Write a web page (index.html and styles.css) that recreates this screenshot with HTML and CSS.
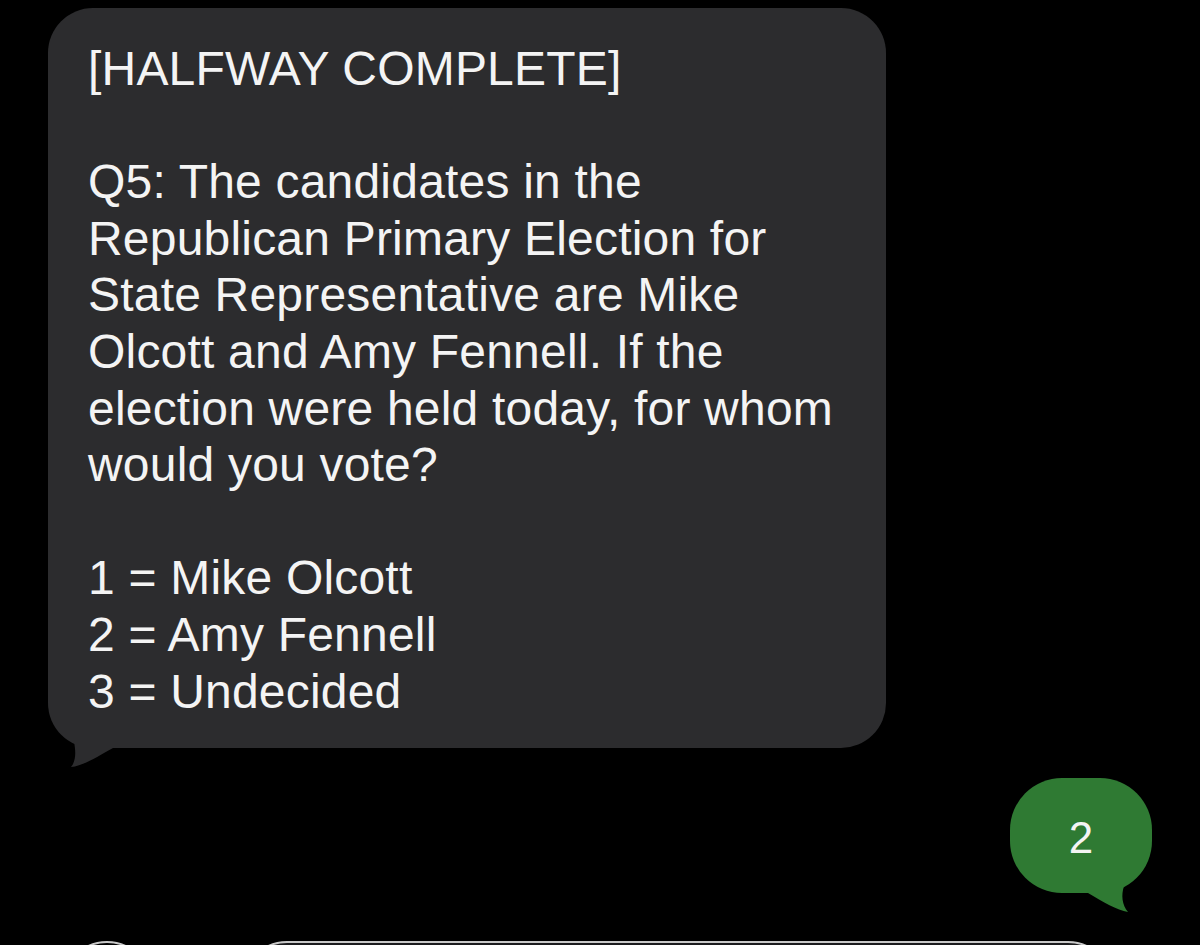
FILE: index.html
```html
<!DOCTYPE html>
<html lang="en">
<head>
<meta charset="utf-8">
<title>Messages</title>
<link rel="stylesheet" href="styles.css">
</head>
<body>
<main class="thread">
  <div class="msg msg-in">
    <div class="bubble bubble-in">
      <p>[HALFWAY COMPLETE]</p>
      <p>Q5: The candidates in the<br>Republican Primary Election for<br>State Representative are Mike<br>Olcott and Amy Fennell. If the<br>election were held today, for whom<br>would you vote?</p>
      <p>1 = Mike Olcott<br>2 = Amy Fennell<br>3 = Undecided</p>
    </div>
    <svg class="tail tail-in" width="70" height="32" viewBox="0 0 70 32" aria-hidden="true">
      <path d="M26,4 C28,14 28,23 23,29 C35,28 49,19 65,10 L65,0 L30,0 Z"/>
    </svg>
  </div>

  <div class="msg msg-out">
    <div class="bubble bubble-out">2</div>
    <svg class="tail tail-out" width="70" height="32" viewBox="0 0 70 32" aria-hidden="true">
      <path d="M42,3 C39,12 40,22 46,29 C35,27 21,19 6,10 L6,0 L38,0 Z"/>
    </svg>
  </div>
</main>

<footer class="composer">
  <span class="apps-btn"></span>
  <span class="field"></span>
</footer>
</body>
</html>
```

FILE: styles.css
```css
html, body {
  margin: 0;
  padding: 0;
}

body {
  width: 1200px;
  height: 945px;
  overflow: hidden;
  background: #000;
  font-family: "Liberation Sans", Arial, sans-serif;
  color: #f4f4f4;
}

.thread {
  display: flex;
  flex-direction: column;
  padding: 8px 48px 0 48px;
}

.msg {
  position: relative;
}

.msg-in {
  align-self: flex-start;
}

.msg-out {
  align-self: flex-end;
  margin-top: 30px;
}

.bubble {
  box-sizing: border-box;
}

/* incoming message: grey bubble, fixed height so the thread lines up */
.bubble-in {
  width: 838px;
  height: 740px;
  padding: 33px 40px 0 40px;
  background: #2c2c2e;
  border-radius: 45px;
  font-size: 48px;
  line-height: 56.6px;
  letter-spacing: 0.2px;
}

.bubble-in p {
  margin: 0;
}

.bubble-in p + p {
  margin-top: 56.6px;
}

/* outgoing reply: green bubble */
.bubble-out {
  width: 142px;
  height: 115px;
  display: flex;
  align-items: center;
  justify-content: center;
  background: #2f7a33;
  border-radius: 52px;
  font-size: 44px;
  line-height: 1;
  padding-top: 4px;
}

.tail {
  position: absolute;
  bottom: -22px;
  display: block;
}

.tail-in {
  left: 0;
  fill: #2c2c2e;
}

.tail-out {
  right: 0;
  fill: #2f7a33;
}

/* input bar: only its top edge shows at the bottom of the screen */
.composer {
  display: flex;
  align-items: flex-start;
  gap: 90px;
  margin-top: 48px;
  padding-left: 62px;
  height: 4px;
  overflow: hidden;
}

.apps-btn {
  display: block;
  flex: none;
  width: 90px;
  height: 90px;
  box-sizing: border-box;
  border: 2px solid #c9c9c9;
  border-radius: 50%;
}

.field {
  display: block;
  flex: none;
  width: 871px;
  height: 90px;
  box-sizing: border-box;
  border: 2px solid #c9c9c9;
  border-radius: 60px;
  background: #1c1c1e;
}
```
